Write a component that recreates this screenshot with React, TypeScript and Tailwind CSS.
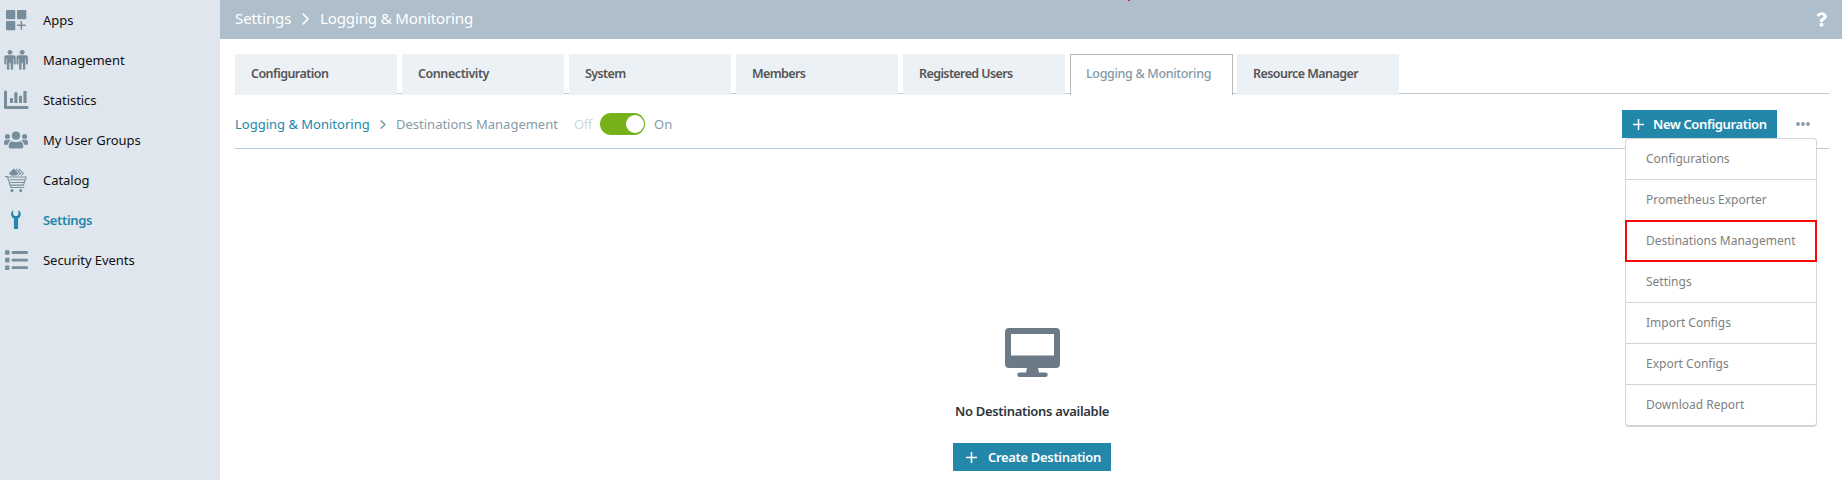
import type { ReactNode } from "react";
import { FaQuestion } from "react-icons/fa";

const Person = ({ x }: { x: number }) => (
  <g transform={`translate(${x} 0)`}>
    <circle cx="6" cy="4.3" r="2.4" />
    <path d="M2.4 7.3h7.2c1.3 0 2.1.9 2.1 2.1v6c0 .7-.4 1.1-1 1.1s-1-.4-1-1.1v-4.6h-.6v10c0 .7-.5 1.2-1.2 1.2s-1.2-.5-1.2-1.2V15h-1.4v5.8c0 .7-.5 1.2-1.2 1.2s-1.2-.5-1.2-1.2v-10h-.6v4.6c0 .7-.4 1.1-1 1.1s-1-.4-1-1.1v-6c0-1.2.8-2.1 2.1-2.1z" />
  </g>
);

const icons: Record<string, ReactNode> = {
  apps: (
    <>
      <rect x="2" y="2" width="9.3" height="9.3" rx="1" />
      <rect x="13" y="2" width="9.3" height="9.3" rx="1" />
      <rect x="2" y="13" width="9.3" height="9.3" rx="1" />
      <path d="M16.6 13h1.5v3.6h3.7v1.5h-3.7v3.6h-1.5v-3.6H13v-1.5h3.6z" />
    </>
  ),
  management: (
    <>
      <Person x={0} />
      <Person x={12.2} />
    </>
  ),
  statistics: (
    <>
      <path d="M0 4a1.4 1.4 0 0 1 3 0v14h20a1.4 1.4 0 0 1 0 3H1.2A1.2 1.2 0 0 1 0 19.8z" />
      <rect x="6" y="10" width="3" height="5" rx=".6" />
      <rect x="10.3" y="4.3" width="3.2" height="10.7" rx=".6" />
      <rect x="15" y="7.7" width="3" height="7.3" rx=".6" />
      <rect x="19.4" y="3" width="3.2" height="12" rx=".6" />
    </>
  ),
  groups: (
    <>
      <circle cx="12" cy="7.7" r="4.1" />
      <circle cx="3.4" cy="8.5" r="2.5" />
      <circle cx="20.6" cy="8.5" r="2.5" />
      <path d="M8.3 13.2c2.3 1.2 5.1 1.2 7.4 0 2.4 0 3.6 2.4 3.6 5 0 1.6-.9 2.3-2.3 2.3H7c-1.4 0-2.3-.7-2.3-2.3 0-2.6 1.2-5 3.6-5z" />
      <path d="M1.6 11.6c1.2.5 2.6.5 3.8 0l1.1.8c-1.5 1.1-2.3 2.4-2.6 4.3H1.3C.4 16.7 0 16.2 0 15.4c0-1.7.4-3.3 1.6-3.8zM22.4 11.6c-1.2.5-2.6.5-3.8 0l-1.1.8c1.5 1.1 2.3 2.4 2.6 4.3h2.6c.9 0 1.3-.5 1.3-1.3 0-1.7-.4-3.3-1.6-3.8z" />
    </>
  ),
  catalog: (
    <>
      <path d="M9.8.5l4.9 4.8-2.2 2.2H7.2L4.9 5.3z" />
      <path
        d="M12 .8l4.4 4.5-2 2.2M14.8.8l4.4 4.5-2 2.2M.8 8.5h2.5l3.6 11h13.3M4 9h18l-2.5 8.1H6.3M5.6 11.7h14.8M6.3 14.4h13.5"
        fill="none"
        stroke="currentColor"
        strokeWidth="1.05"
      />
      <circle cx="8" cy="22.6" r="1.6" />
      <circle cx="16.7" cy="22.6" r="1.6" />
    </>
  ),
  settings: (
    <path d="M9.2 2.3v4.1l1.4 1.5h2.4l1.4-1.5V2.3c1.5.8 2.4 2.3 2.4 4 0 1.9-1.1 3.5-2.7 4.2V21h-4.2V10.5C8.2 9.8 7.1 8.2 7.1 6.3c0-1.7.8-3.2 2.1-4z" />
  ),
  events: (
    <>
      {[4.5, 12.1, 19.7].map((y) => (
        <g key={y}>
          <rect x="1" y={y - 2.3} width="4.5" height="4.6" rx="1" />
          <rect x="7.7" y={y - 1.4} width="16.3" height="2.8" rx="1.2" />
        </g>
      ))}
    </>
  ),
};

const nav = [
  { label: "Apps", icon: "apps" },
  { label: "Management", icon: "management" },
  { label: "Statistics", icon: "statistics" },
  { label: "My User Groups", icon: "groups" },
  { label: "Catalog", icon: "catalog" },
  { label: "Settings", icon: "settings", active: true },
  { label: "Security Events", icon: "events" },
];

const tabs = [
  { label: "Configuration", tracking: "tracking-[-0.54px]" },
  { label: "Connectivity", tracking: "tracking-[-0.43px]" },
  { label: "System", tracking: "tracking-[-0.6px]" },
  { label: "Members", tracking: "tracking-[-0.63px]" },
  { label: "Registered Users", tracking: "tracking-[-0.6px]" },
  { label: "Logging & Monitoring", tracking: "tracking-[-0.32px]", active: true },
  { label: "Resource Manager", tracking: "tracking-[-0.55px]" },
];

const menu = [
  "Configurations",
  "Prometheus Exporter",
  "Destinations Management",
  "Settings",
  "Import Configs",
  "Export Configs",
  "Download Report",
];

const Plus = () => (
  <svg className="size-[11px] shrink-0" viewBox="0 0 11 11" stroke="currentColor" strokeWidth="1.5">
    <path d="M5.5 0v11M0 5.5h11" />
  </svg>
);

export default function App() {
  return (
    <div className="flex h-[480px] w-[1842px] overflow-hidden bg-white font-['Noto_Sans',sans-serif] text-[13px] whitespace-nowrap">
      <nav className="w-[220px] shrink-0 bg-[#dfe6ed]">
        {nav.map((n) => (
          <a
            key={n.label}
            className={`flex h-10 items-center gap-[15px] pl-1 ${n.active ? "font-semibold tracking-[-0.33px] text-[#2387aa]" : "tracking-[-0.04px] text-[#111]"}`}
          >
            <svg viewBox="0 0 24 24" fill="currentColor" className={`size-6 overflow-visible ${n.active ? "text-[#2387aa]" : "text-[#788d9b]"}`}>
              {icons[n.icon]}
            </svg>
            <span className="pt-0.5">{n.label}</span>
          </a>
        ))}
      </nav>

      <div className="flex min-w-0 flex-1 flex-col">
        <header className="relative flex h-[39px] shrink-0 items-center bg-[#aebfcb] pr-[15px] pb-0.5 pl-[15px] text-[15px] text-white">
          <span className="w-[67px] tracking-[-0.1px]">Settings</span>
          <svg className="mr-[11px] h-3 w-[7px]" viewBox="0 0 7 12" fill="none" stroke="currentColor" strokeWidth="1.5">
            <path d="M.7.6L6 6 .7 11.4" />
          </svg>
          <span className="tracking-[-0.12px]">Logging &amp; Monitoring</span>
          <FaQuestion className="mt-0.5 ml-auto h-[15px] w-[11px]" />
          <span className="absolute top-0 left-[908px] h-px w-0.5 bg-[#f11]" />
        </header>

        <div className="mt-[15px] mr-[13px] ml-[15px] flex h-10 shrink-0 gap-[5px] border-b border-[#bccad4]">
          {tabs.map((t) => (
            <div
              key={t.label}
              className={`-mb-0.5 flex h-[41px] items-center pb-px text-[12.5px] ${t.tracking} ${
                t.active
                  ? "-mr-px w-[163px] border border-b-0 border-[#b8b8b8] bg-white pl-[15px] font-medium text-[#8498a6]"
                  : "w-[162px] bg-[#ecf1f5] pl-4 font-semibold text-[#555]"
              }`}
            >
              {t.label}
            </div>
          ))}
        </div>

        <div className="mr-[13px] ml-[15px] flex h-[55px] shrink-0 items-center border-b border-[#b9cbd8] pt-[6px] text-[#879baa]">
          <span className="w-[145px] pt-0.5 text-[#2387aa]">Logging &amp; Monitoring</span>
          <svg className="mr-[10px] h-[9px] w-[6px]" viewBox="0 0 6 9" fill="none" stroke="currentColor" strokeWidth="1.6">
            <path d="M.7.4L4.9 4.5.7 8.6" />
          </svg>
          <span className="w-[178px] pt-0.5">Destinations Management</span>
          <span className="w-[26px] pt-0.5 tracking-[-0.4px] text-[#cdd8e0]">Off</span>
          <span className="flex h-[22px] w-[45px] items-center justify-end rounded-full bg-[#75b219] px-px">
            <span className="size-[18px] rounded-full bg-white" />
          </span>
          <span className="ml-[9px] pt-0.5">On</span>

          <div className="relative mr-[19px] ml-auto flex items-center">
            <button className="flex h-7 w-[155px] items-center gap-[9px] bg-[#2387aa] pl-[11px] font-semibold tracking-[-0.35px] text-white">
              <Plus />
              <span className="pt-px">New Configuration</span>
            </button>
            <svg className="ml-[19px] h-1 w-[14px]" viewBox="0 0 14 4" fill="currentColor">
              <circle cx="2" cy="2" r="1.9" />
              <circle cx="7" cy="2" r="1.9" />
              <circle cx="12" cy="2" r="1.9" />
            </svg>
            <ul className="absolute top-[28px] left-[3px] w-[192px] rounded-[4px] border border-b-2 border-[#d5d5d5] bg-white text-[12px] text-[#808080]">
              {menu.map((m, i) => (
                <li key={m} className={`relative flex items-center pl-5 ${i < menu.length - 1 ? "h-[41px] border-b border-[#d5d5d5]" : "h-10"}`}>
                  {m}
                  {m === "Destinations Management" && <span className="absolute -inset-x-px -top-px -bottom-px border-2 border-[#f80808]" />}
                </li>
              ))}
            </ul>
          </div>
        </div>

        <div className="flex flex-col items-center pt-[179px]">
          <svg className="ml-[3px] h-[49px] w-[55px]" viewBox="0 0 55 49" fill="#6b7a86">
            <path
              fillRule="evenodd"
              d="M4 0h47a4 4 0 0 1 4 4v32a4 4 0 0 1-4 4H33l1 4.5h6.5a2.25 2.25 0 0 1 0 4.5h-26a2.25 2.25 0 0 1 0-4.5H21l1-4.5H4a4 4 0 0 1-4-4V4a4 4 0 0 1 4-4zM6 6v21.5h43V6z"
            />
          </svg>
          <p className="mt-6 ml-0.5 h-5 leading-5 font-semibold tracking-[-0.31px] text-[#2c353b]">No Destinations available</p>
          <button className="mt-[22px] ml-0.5 flex h-7 w-[158px] items-center gap-[11px] bg-[#2387aa] pl-[13px] font-semibold tracking-[-0.33px] text-white">
            <Plus />
            <span className="pt-px">Create Destination</span>
          </button>
        </div>
      </div>
    </div>
  );
}
